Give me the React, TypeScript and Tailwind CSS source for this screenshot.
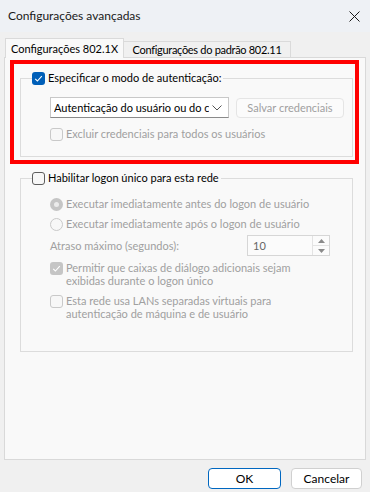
import { type FunctionComponent, type ReactNode } from "react";

type BoxState = "checked" | "empty" | "disabledEmpty" | "disabledChecked";

const Check: FunctionComponent = () => (
	<svg width="13" height="13" viewBox="0 0 13 13" className="block">
		<polyline points="3.2,6.8 5.4,9 9.8,4.2" fill="none" stroke="#ffffff" strokeWidth="1.1" />
	</svg>
);

const Box: FunctionComponent<{ state: BoxState }> = ({ state }) => {
	if (state === "checked") {
		return (
			<span className="block size-[13px] shrink-0 rounded-[3px] bg-[#005fb8]">
				<Check />
			</span>
		);
	}
	if (state === "disabledChecked") {
		return (
			<span className="block size-[13px] shrink-0 rounded-[3px] bg-[#c5c5c5]">
				<Check />
			</span>
		);
	}
	if (state === "empty") {
		return <span className="block size-[13px] shrink-0 rounded-[3px] border border-[#5d5d5d] bg-[#f7f7f7]" />;
	}
	return <span className="block size-[13px] shrink-0 rounded-[3px] border border-[#c9c9c9] bg-[#f7f7f7]" />;
};

const Radio: FunctionComponent<{ checked: boolean }> = ({ checked }) => {
	if (checked) {
		return (
			<span className="flex size-[13px] shrink-0 items-center justify-center rounded-full bg-[#c5c5c5]">
				<span className="block size-[5px] rounded-full bg-[#ebebeb]" />
			</span>
		);
	}
	return <span className="block size-[13px] shrink-0 rounded-full border border-[#c9c9c9] bg-[#f7f7f7]" />;
};

const OptionRow: FunctionComponent<{ control: ReactNode; disabled?: boolean; className?: string; children: ReactNode }> = ({
	control,
	disabled = false,
	className = "",
	children
}) => (
	<div className={`flex h-[16px] items-center gap-[3px] ${disabled ? "text-[#a0a0a0]" : "text-black"} ${className}`}>
		{control}
		<span className="whitespace-nowrap">{children}</span>
	</div>
);

const WrappedOption: FunctionComponent<{ control: ReactNode; className?: string; lines: [string, string] }> = ({
	control,
	className = "",
	lines
}) => (
	<div className={`flex items-start gap-[3px] text-[#a0a0a0] ${className}`}>
		<span className="mt-px">{control}</span>
		<span className="leading-[13px] whitespace-nowrap">
			{lines[0]}
			<br />
			{lines[1]}
		</span>
	</div>
);

export default function App() {
	return (
		<div className="flex h-[492px] w-[370px] flex-col overflow-hidden bg-[#f0f0f0] font-['Lato',sans-serif] text-[11px] leading-[16px] text-black">
			<div className="flex h-[32px] shrink-0 items-center justify-between bg-[#eef1f5] pr-[10px] pl-[8px]">
				<span className="text-[12px] text-[#1a1a1a]">Configurações avançadas</span>
				<svg width="11" height="11" viewBox="0 0 11 11">
					<path d="M0.5 0.5 L10.5 10.5 M10.5 0.5 L0.5 10.5" stroke="#1a1a1a" strokeWidth="1" />
				</svg>
			</div>

			<div className="relative z-10 mt-[6px] flex h-[20px] items-end pl-[5px] whitespace-nowrap">
				<div className="flex h-[20px] w-[119px] items-center justify-center border border-b-0 border-[#dadada] bg-[#f9f9f9]">
					Configurações 802.1X
				</div>
				<div className="mb-px flex h-[16px] w-[167px] items-center justify-center border border-b-0 border-l-0 border-[#dadada] bg-[#f0f0f0] tracking-[-0.3px]">
					Configurações do padrão 802.11
				</div>
			</div>

			<div className="mx-[4px] -mt-px h-[403px] border border-[#d9d9d9] bg-[#f9f9f9]">
				<div className="mt-[2px] ml-[5px] h-[104px] w-[349px] border-4 border-[#ff0000]">
					<fieldset className="mt-[6px] ml-[6px] h-[87px] w-[333px] border border-[#dcdcdc]">
						<legend className="ml-[11px] pr-[2px]">
							<OptionRow control={<Box state="checked" />}>Especificar o modo de autenticação:</OptionRow>
						</legend>
						<div className="mt-[11px] ml-[29px] flex items-start gap-[7px]">
							<div className="flex h-[21px] w-[179px] items-center justify-between overflow-hidden border border-[#c8c8c8] border-b-[#8a8a8a] bg-white pr-[6px] pl-[3px]">
								<span className="w-[155px] overflow-hidden whitespace-nowrap">Autenticação do usuário ou do co</span>
								<svg width="10" height="6" viewBox="0 0 10 6">
									<path d="M0.5 0.5 L5 5 L9.5 0.5" fill="none" stroke="#555555" strokeWidth="1" />
								</svg>
							</div>
							<div className="mt-px flex h-[20px] w-[108px] items-center justify-center rounded-[4px] border border-[#e5e5e5] bg-[#fbfbfb] text-[#a0a0a0]">
								Salvar credenciais
							</div>
						</div>
						<OptionRow control={<Box state="disabledEmpty" />} disabled className="mt-[8px] ml-[29px]">
							Excluir credenciais para todos os usuários
						</OptionRow>
					</fieldset>
				</div>

				<fieldset className="mt-[6px] ml-[15px] h-[182px] w-[333px] border border-[#dcdcdc]">
					<legend className="ml-[11px] pr-[2px]">
						<OptionRow control={<Box state="empty" />}>Habilitar logon único para esta rede</OptionRow>
					</legend>
					<div className="ml-[29px] flex flex-col">
						<OptionRow control={<Radio checked />} disabled className="mt-[10px]">
							Executar imediatamente antes do logon de usuário
						</OptionRow>
						<OptionRow control={<Radio checked={false} />} disabled className="mt-[4px]">
							Executar imediatamente após o logon de usuário
						</OptionRow>
						<div className="mt-[3px] flex h-[21px] w-[280px] items-center justify-between text-[#a0a0a0]">
							<span>Atraso máximo (segundos):</span>
							<div className="flex h-[21px] w-[83px] border border-[#d6d6d6] bg-[#fbfbfb]">
								<span className="flex flex-1 items-center pl-[5px] text-[#666666]">10</span>
								<div className="flex w-[17px] flex-col border-l border-[#e3e3e3]">
									<div className="flex flex-1 items-center justify-center border-b border-[#e3e3e3]">
										<svg width="7" height="4" viewBox="0 0 7 4">
											<path d="M0 4 L3.5 0 L7 4 Z" fill="#8a8a8a" />
										</svg>
									</div>
									<div className="flex flex-1 items-center justify-center">
										<svg width="7" height="4" viewBox="0 0 7 4">
											<path d="M0 0 L3.5 4 L7 0 Z" fill="#8a8a8a" />
										</svg>
									</div>
								</div>
							</div>
						</div>
						<WrappedOption
							control={<Box state="disabledChecked" />}
							className="mt-[5px]"
							lines={["Permitir que caixas de diálogo adicionais sejam", "exibidas durante o logon único"]}
						/>
						<WrappedOption
							control={<Box state="disabledEmpty" />}
							className="mt-[7px]"
							lines={["Esta rede usa LANs separadas virtuais para", "autenticação de máquina e de usuário"]}
						/>
					</div>
				</fieldset>
			</div>

			<div className="mt-[8px] flex justify-end gap-[10px] pr-[8px]">
				<button
					type="button"
					className="flex h-[21px] w-[73px] items-center justify-center rounded-[4px] border border-[#0067c0] bg-white text-[12px] text-black"
				>
					OK
				</button>
				<button
					type="button"
					className="flex h-[21px] w-[71px] items-center justify-center rounded-[4px] border border-[#d0d0d0] bg-white text-[12px] text-black"
				>
					Cancelar
				</button>
			</div>
		</div>
	);
}
